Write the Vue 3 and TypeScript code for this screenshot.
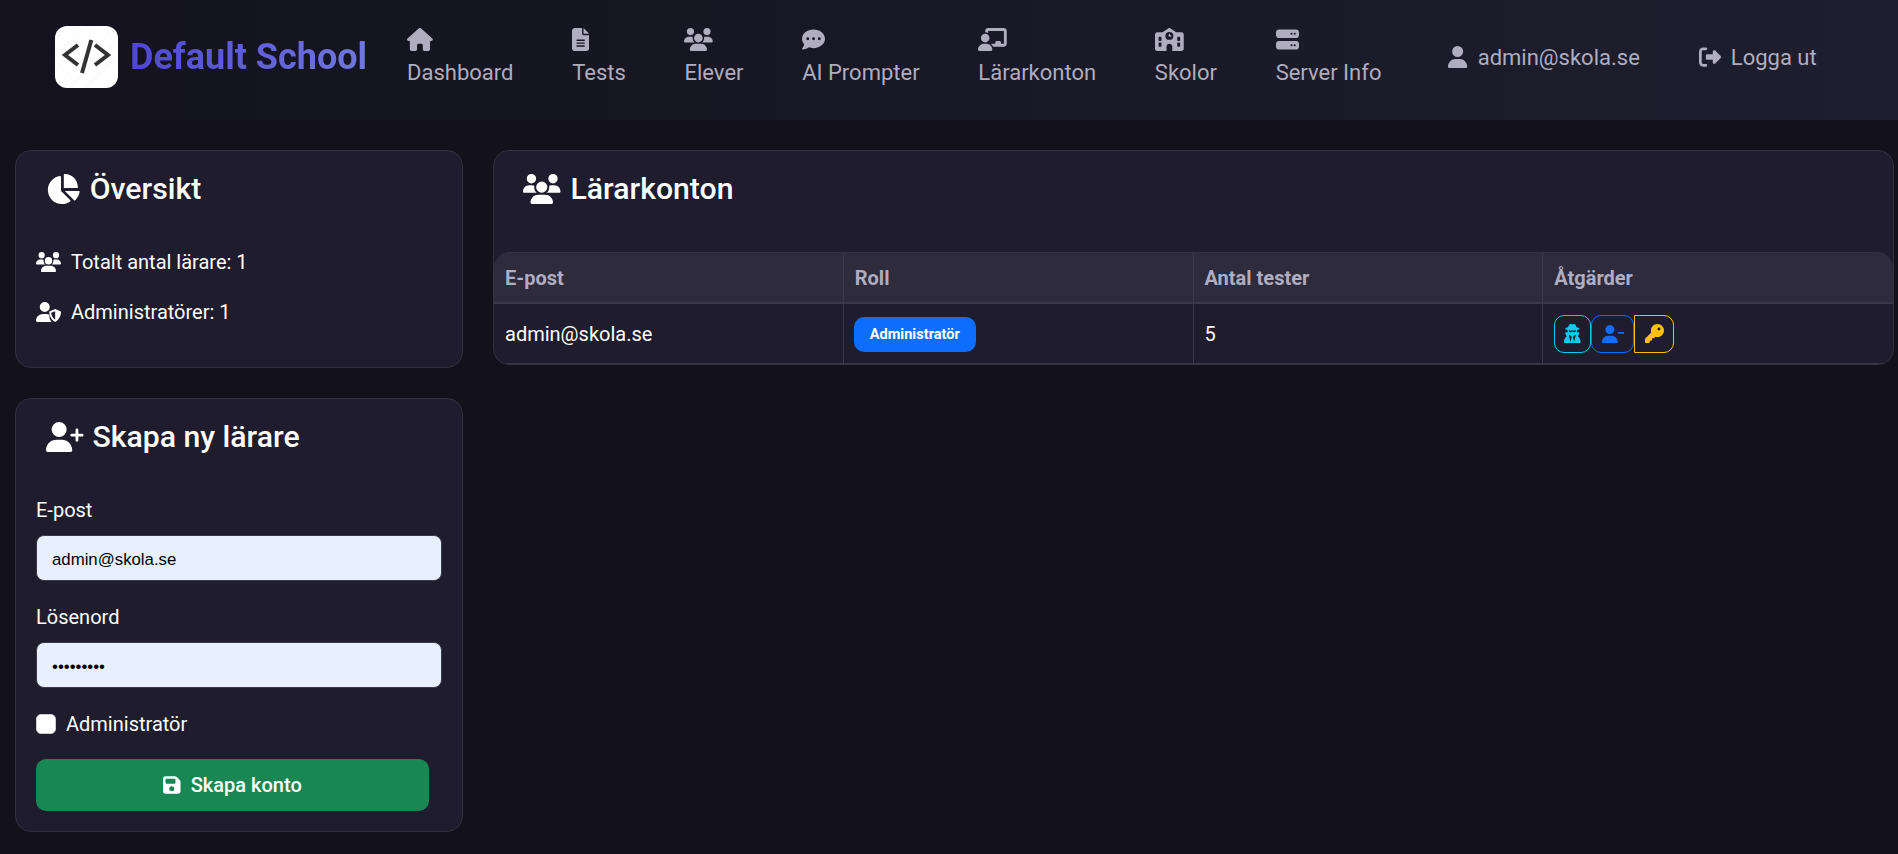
<script setup lang="ts">
const userBody = 'M96 128a128 128 0 1 1 256 0A128 128 0 1 1 96 128zM0 482.3C0 383.8 79.8 304 178.3 304h91.4C368.2 304 448 383.8 448 482.3c0 16.4-13.3 29.7-29.7 29.7H29.7C13.3 512 0 498.7 0 482.3z'
const users = 'M144 0a80 80 0 1 1 0 160A80 80 0 1 1 144 0zM512 0a80 80 0 1 1 0 160A80 80 0 1 1 512 0zM0 298.7C0 239.8 47.8 192 106.7 192h42.7c15.9 0 31 3.5 44.6 9.7c-1.3 7.2-1.9 14.7-1.9 22.3c0 38.2 16.8 72.5 43.3 96c-.2 0-.4 0-.7 0H21.3C9.6 320 0 310.4 0 298.7zM405.3 320c-.2 0-.4 0-.7 0c26.6-23.5 43.3-57.8 43.3-96c0-7.6-.7-15-1.9-22.3c13.6-6.3 28.7-9.7 44.6-9.7h42.7C592.2 192 640 239.8 640 298.7c0 11.8-9.6 21.3-21.3 21.3H405.3zM224 224a96 96 0 1 1 192 0 96 96 0 1 1 -192 0zM128 485.3C128 411.7 187.7 352 261.3 352H378.7C452.3 352 512 411.7 512 485.3c0 14.7-11.9 26.7-26.7 26.7H154.7c-14.7 0-26.7-11.9-26.7-26.7z'
const pie = 'M304 240V16.6c0-9 7-16.6 16-16.6C443.7 0 544 100.3 544 224c0 9-7.6 16-16.6 16H304zM32 272C32 150.7 122.1 50.3 239 34.3c9.2-1.3 17 6.1 17 15.4V288L412.5 444.5c6.7 6.7 6.2 17.7-1.5 23.1C371.8 495.6 323.8 512 272 512C139.5 512 32 404.6 32 272zm526.4 16c9.3 0 16.6 7.8 15.4 17c-7.7 55.9-34.6 105.6-73.9 142.3c-6 5.6-15.4 5.2-21.2-.7L320 288H558.4z'
const shield = 'M224 256A128 128 0 1 0 224 0a128 128 0 1 0 0 256zm-45.7 48C79.8 304 0 383.8 0 482.3C0 498.7 13.3 512 29.7 512H400c-35-40-60-95-60-165c0-8 1-15 3-22c-22-14-48-21-73-21H178.3zM490 180l135 56c9 4 15 13 15 22c0 60-26 180-140 250c-6 4-14 4-20 0C366 438 340 318 340 258c0-9 6-18 15-22l135-56zM490 235L390 277C392 327 415 407 490 452Z'
const plus = userBody + 'M504 312V248H440c-13.3 0-24-10.7-24-24s10.7-24 24-24h64V136c0-13.3 10.7-24 24-24s24 10.7 24 24v64h64c13.3 0 24 10.7 24 24s-10.7 24-24 24H552v64c0 13.3-10.7 24-24 24s-24-10.7-24-24z'
const minus = userBody + 'M472 200H616c13.3 0 24 10.7 24 24s-10.7 24-24 24H472c-13.3 0-24-10.7-24-24s10.7-24 24-24z'
const floppy = 'M64 32C28.7 32 0 60.7 0 96V416c0 35.3 28.7 64 64 64H384c35.3 0 64-28.7 64-64V173.3c0-17-6.7-33.3-18.7-45.3L352 50.7C340 38.7 323.7 32 306.7 32H64zm0 96c0-17.7 14.3-32 32-32H288c17.7 0 32 14.3 32 32v64c0 17.7-14.3 32-32 32H96c-17.7 0-32-14.3-32-32V128zM224 288a64 64 0 1 1 0 128 64 64 0 1 1 0-128z'
const key = 'M336 352c97.2 0 176-78.8 176-176S433.2 0 336 0S160 78.8 160 176c0 18.7 2.9 36.8 8.3 53.7L7 391c-4.5 4.5-7 10.6-7 17v80c0 13.3 10.7 24 24 24h80c13.3 0 24-10.7 24-24V448h40c13.3 0 24-10.7 24-24V384h40c6.4 0 12.5-2.5 17-7l33.3-33.3c16.9 5.4 35 8.3 53.7 8.3zM376 96a40 40 0 1 1 0 80 40 40 0 1 1 0-80z'
const secret = 'M224 16c-6.7 0-10.8-2.8-15.5-6.1C201.9 5.4 194 0 176 0c-30.5 0-52 43.7-66 89.4C62.7 98.1 32 112.2 32 128c0 14.3 25 27.1 64.6 35.9c-.4 4-.6 8-.6 12.1c0 17 3.3 33.2 9.3 48H45.4C38 224 32 230 32 237.4c0 1.7 .3 3.4 1 5l38.8 96.9C28.2 371.8 0 423.8 0 482.3C0 498.7 13.3 512 29.7 512H418.3c16.4 0 29.7-13.3 29.7-29.7c0-58.5-28.2-110.4-71.7-143L415 242.4c.6-1.6 1-3.3 1-5c0-7.4-6-13.4-13.4-13.4H342.7c6-14.8 9.3-31 9.3-48c0-4.1-.2-8.1-.6-12.1C391 155.1 416 142.3 416 128c0-15.8-30.7-29.9-78-38.6C324 43.7 302.5 0 272 0c-18 0-25.9 5.4-32.5 9.9c-4.8 3.3-8.8 6.1-15.5 6.1zm56 208H267.6c-16.5 0-31.1-10.6-36.3-26.2c-2.3-7-12.2-7-14.5 0c-5.2 15.6-19.9 26.2-36.3 26.2H168c-22.1 0-40-17.9-40-40V169.6c28.2 4.1 61 6.4 96 6.4s67.8-2.3 96-6.4V184c0 22.1-17.9 40-40 40zm-88 96l16 32L176 480 128 288l64 32zm128-32L272 480 240 352l16-32 64-32z'

const navItems = [
  { label: 'Dashboard', vb: '0 0 576 512', d: 'M575.8 255.5c0 18-15 32.1-32 32.1h-32l.7 160.2c0 2.7-.2 5.4-.5 8.1V472c0 22.1-17.9 40-40 40H456c-1.1 0-2.2 0-3.3-.1c-1.4 .1-2.8 .1-4.2 .1H416 392c-22.1 0-40-17.9-40-40V448 384c0-17.7-14.3-32-32-32H256c-17.7 0-32 14.3-32 32v64 24c0 22.1-17.9 40-40 40H160 128.1c-1.5 0-3-.1-4.5-.2c-1.2 .1-2.4 .2-3.6 .2H104c-22.1 0-40-17.9-40-40V360c0-.9 0-1.9 .1-2.8V287.6H32c-18 0-32-14-32-32.1c0-9 3-17 10-24L266.4 8c7-7 15-8 22-8s15 2 21 7L564.8 231.5c8 7 12 15 11 24z' },
  { label: 'Tests', vb: '0 0 384 512', d: 'M64 0C28.7 0 0 28.7 0 64V448c0 35.3 28.7 64 64 64H320c35.3 0 64-28.7 64-64V160H256c-17.7 0-32-14.3-32-32V0H64zM256 0V128H384L256 0zM112 256H272c8.8 0 16 7.2 16 16s-7.2 16-16 16H112c-8.8 0-16-7.2-16-16s7.2-16 16-16zm0 64H272c8.8 0 16 7.2 16 16s-7.2 16-16 16H112c-8.8 0-16-7.2-16-16s7.2-16 16-16zm0 64H272c8.8 0 16 7.2 16 16s-7.2 16-16 16H112c-8.8 0-16-7.2-16-16s7.2-16 16-16z' },
  { label: 'Elever', vb: '0 0 640 512', d: users },
  { label: 'AI Prompter', vb: '0 0 512 512', d: 'M256 448c141.4 0 256-93.1 256-208S397.4 32 256 32S0 125.1 0 240c0 45.1 17.7 86.8 47.7 120.9c-1.9 24.5-11.4 46.3-21.4 62.9c-5.5 9.2-11.1 16.6-15.2 21.6c-2.1 2.5-3.7 4.4-4.9 5.7c-.6 .6-1 1.1-1.3 1.4l-.3 .3c-4.6 4.6-5.9 11.4-3.4 17.4c2.5 6 8.3 9.9 14.8 9.9c28.7 0 57.6-8.9 81.6-19.3c22.9-10 42.4-21.9 54.3-30.6c31.8 11.5 67 17.9 104.1 17.9zM128 208a32 32 0 1 1 0 64 32 32 0 1 1 0-64zm128 0a32 32 0 1 1 0 64 32 32 0 1 1 0-64zm96 32a32 32 0 1 1 64 0 32 32 0 1 1 -64 0z' },
  { label: 'Lärarkonton', vb: '0 0 640 512', d: 'M160 64c0-35.3 28.7-64 64-64H576c35.3 0 64 28.7 64 64V352c0 35.3-28.7 64-64 64H336.8c-11.8-25.5-29.9-47.5-52.4-64H384V320c0-17.7 14.3-32 32-32h64c17.7 0 32 14.3 32 32v32h64V64L224 64v49.1C205.2 102.2 183.3 96 160 96V64zm0 64a96 96 0 1 1 0 192 96 96 0 1 1 0-192zM133.3 352h53.3C260.3 352 320 411.7 320 485.3c0 14.7-11.9 26.7-26.7 26.7H26.7C11.9 512 0 500.1 0 485.3C0 411.7 59.7 352 133.3 352z' },
  { label: 'Skolor', vb: '0 0 640 512', d: 'M337.8 5.4C327-1.8 313-1.8 302.2 5.4L166.3 96H48C21.5 96 0 117.5 0 144V464c0 26.5 21.5 48 48 48H592c26.5 0 48-21.5 48-48V144c0-26.5-21.5-48-48-48H473.7L337.8 5.4zM256 416c0-35.3 28.7-64 64-64s64 28.7 64 64v96H256V416zM96 192h32c8.8 0 16 7.2 16 16v64c0 8.8-7.2 16-16 16H96c-8.8 0-16-7.2-16-16V208c0-8.8 7.2-16 16-16zm400 16c0-8.8 7.2-16 16-16h32c8.8 0 16 7.2 16 16v64c0 8.8-7.2 16-16 16H512c-8.8 0-16-7.2-16-16V208zM96 320h32c8.8 0 16 7.2 16 16v64c0 8.8-7.2 16-16 16H96c-8.8 0-16-7.2-16-16V336c0-8.8 7.2-16 16-16zm400 16c0-8.8 7.2-16 16-16h32c8.8 0 16 7.2 16 16v64c0 8.8-7.2 16-16 16H512c-8.8 0-16-7.2-16-16V336zM232 176a88 88 0 1 1 176 0 88 88 0 1 1 -176 0zm88-48c-8.8 0-16 7.2-16 16v32c0 8.8 7.2 16 16 16h32c8.8 0 16-7.2 16-16s-7.2-16-16-16H336V144c0-8.8-7.2-16-16-16z' },
  { label: 'Server Info', vb: '0 0 512 512', d: 'M64 32C28.7 32 0 60.7 0 96v64c0 35.3 28.7 64 64 64H448c35.3 0 64-28.7 64-64V96c0-35.3-28.7-64-64-64H64zm280 72a24 24 0 1 1 0 48 24 24 0 1 1 0-48zm48 24a24 24 0 1 1 48 0 24 24 0 1 1 -48 0zM64 288c-35.3 0-64 28.7-64 64v64c0 35.3 28.7 64 64 64H448c35.3 0 64-28.7 64-64V352c0-35.3-28.7-64-64-64H64zm280 72a24 24 0 1 1 0 48 24 24 0 1 1 0-48zm48 24a24 24 0 1 1 48 0 24 24 0 1 1 -48 0z' },
]
const logout = 'M377.9 105.9L500.7 228.7c7.2 7.2 11.3 17.1 11.3 27.3s-4.1 20.1-11.3 27.3L377.9 406.1c-6.4 6.4-15 9.9-24 9.9c-18.7 0-33.9-15.2-33.9-33.9l0-62.1-128 0c-17.7 0-32-14.3-32-32l0-64c0-17.7 14.3-32 32-32l128 0 0-62.1c0-18.7 15.2-33.9 33.9-33.9c9 0 17.6 3.6 24 9.9zM160 96L96 96c-17.7 0-32 14.3-32 32l0 256c0 17.7 14.3 32 32 32l64 0c17.7 0 32 14.3 32 32s-14.3 32-32 32l-64 0c-53 0-96-43-96-96L0 128C0 75 43 32 96 32l64 0c17.7 0 32 14.3 32 32s-14.3 32-32 32z'
</script>

<template>
  <div class="page">
    <nav class="nav">
      <a class="brand">
        <span class="logo">
          <svg viewBox="0 0 63 62" width="63" height="62">
            <path d="M23 19 L10 29 L23 39 M40 19 L53 29 L40 39" fill="none" stroke="#333" stroke-width="4" />
            <path d="M36.300 14 L27 47" fill="none" stroke="#333" stroke-width="4" />
          </svg>
        </span>
        <span class="brand-text">Default School</span>
      </a>
      <div class="nav-links">
        <a v-for="item in navItems" :key="item.label" class="nav-link">
          <svg class="nav-icon" :viewBox="item.vb" fill="currentColor"><path :d="item.d" /></svg>
          <span>{{ item.label }}</span>
        </a>
      </div>
      <div class="nav-right">
        <a class="nav-side user">
          <svg class="side-icon" viewBox="0 0 448 512" fill="currentColor"><path :d="userBody" /></svg>
          <span>admin@skola.se</span>
        </a>
        <a class="nav-side">
          <svg class="side-icon" viewBox="0 0 512 512" fill="currentColor"><path :d="logout" /></svg>
          <span>Logga ut</span>
        </a>
      </div>
    </nav>

    <main class="main">
      <aside class="side">
        <section class="card overview">
          <h2 class="title overview-title">
            <svg class="title-icon" viewBox="0 0 576 512" fill="currentColor"><path :d="pie" /></svg>
            Översikt
          </h2>
          <p class="stat">
            <svg class="stat-icon" viewBox="0 0 640 512" fill="currentColor"><path :d="users" /></svg>
            Totalt antal lärare: 1
          </p>
          <p class="stat">
            <svg class="stat-icon" viewBox="0 0 640 512" fill="currentColor"><path :d="shield" fill-rule="evenodd" /></svg>
            Administratörer: 1
          </p>
        </section>

        <section class="card create">
          <h2 class="title create-title">
            <svg class="title-icon" viewBox="0 0 640 512" fill="currentColor"><path :d="plus" /></svg>
            Skapa ny lärare
          </h2>
          <form class="form" @submit.prevent>
            <label class="label" for="email">E-post</label>
            <input id="email" class="input" type="email" value="admin@skola.se" />
            <label class="label" for="pw">Lösenord</label>
            <input id="pw" class="input" type="password" value="password1" />
            <label class="check">
              <input class="checkbox" type="checkbox" />
              <span>Administratör</span>
            </label>
            <button class="submit" type="submit">
              <svg class="save-icon" viewBox="0 0 448 512" fill="currentColor"><path :d="floppy" /></svg>
              Skapa konto
            </button>
          </form>
        </section>
      </aside>

      <section class="card accounts">
        <h2 class="title accounts-title">
          <svg class="title-icon" viewBox="0 0 640 512" fill="currentColor"><path :d="users" /></svg>
          Lärarkonton
        </h2>
        <table class="table">
          <thead>
            <tr>
              <th>E-post</th>
              <th>Roll</th>
              <th>Antal tester</th>
              <th>Åtgärder</th>
            </tr>
          </thead>
          <tbody>
            <tr>
              <td>admin@skola.se</td>
              <td><span class="badge">Administratör</span></td>
              <td>5</td>
              <td>
                <div class="actions">
                  <button class="act cyan"><svg viewBox="0 0 448 512" fill="currentColor"><path :d="secret" /></svg></button>
                  <button class="act blue"><svg viewBox="0 0 640 512" fill="currentColor"><path :d="minus" /></svg></button>
                  <button class="act yellow"><svg viewBox="0 0 512 512" fill="currentColor"><path :d="key" /></svg></button>
                </div>
              </td>
            </tr>
          </tbody>
        </table>
      </section>
    </main>
  </div>
</template>

<style>
html, body { margin: 0; background: #12111c; }
</style>

<style scoped>
.page {
  min-height: 854px;
  font-family: Roboto, "Liberation Sans", sans-serif;
  background: #12111c;
  color: #fff;
  overflow: hidden;
}
.nav {
  height: 120px;
  box-sizing: border-box;
  display: flex;
  align-items: center;
  padding: 0 0 6px 55px;
  background: linear-gradient(90deg, #13121e 0%, #1e1e2e 100%);
  color: #b0adbf;
}
.brand { display: flex; align-items: center; gap: 12px; }
.logo {
  width: 63px;
  height: 62px;
  background: repeating-linear-gradient(135deg, #fff 0 9px, #fbfbfb 9px 11px);
  border-radius: 12px;
  display: block;
}
.logo svg { display: block; }
.brand-text {
  font-size: 36px;
  font-weight: 700;
  background: linear-gradient(90deg, #4f46d4, #7078de);
  -webkit-background-clip: text;
  background-clip: text;
  color: transparent;
}
.nav-links { display: flex; gap: 58.700px; margin-left: 40px; }
.nav-link { display: flex; flex-direction: column; align-items: flex-start; gap: 9px; font-size: 22px; line-height: 26px; }
.nav-icon { height: 23px; display: block; }
.nav-right { display: flex; gap: 59px; margin-left: 67px; }
.nav-side { display: flex; align-items: center; gap: 10px; font-size: 22px; }
.side-icon { height: 22px; display: block; }

.main {
  display: grid;
  grid-template-columns: 448px 1401px;
  gap: 30px;
  padding: 30px 0 0 15px;
  align-items: start;
}
.side { display: flex; flex-direction: column; gap: 30px; }
.card {
  background: #1e1c2d;
  border: 1px solid #33313f;
  border-radius: 16px;
  box-sizing: border-box;
}
.title {
  margin: 0;
  display: flex;
  align-items: center;
  font-size: 30.200px;
  font-weight: 500;
  line-height: 36px;
}
.title-icon { height: 30px; display: block; }
.overview { height: 218px; padding: 20px 20px 0; }
.overview-title { padding-left: 10px; gap: 10px; margin-bottom: 43px; }
.stat {
  margin: 0 0 26px;
  display: flex;
  align-items: center;
  gap: 10px;
  font-size: 20px;
  line-height: 24px;
}
.stat-icon { width: 25px; height: 20px; display: block; }

.create { height: 434px; padding: 20px 20px 0; }
.create-title { padding-left: 10px; gap: 9px; margin-bottom: 43px; }
.form { display: flex; flex-direction: column; }
.label { font-size: 20px; line-height: 24px; margin-bottom: 13px; }
.input {
  width: 406px;
  height: 46px;
  box-sizing: border-box;
  background: #e8f0fe;
  border: 1px solid #3a3849;
  border-radius: 8px;
  padding: 3px 15px 0;
  font-family: "Liberation Sans", Arial, sans-serif;
  font-size: 16.800px;
  color: #000;
  margin-bottom: 24px;
  outline: none;
}
.check { display: flex; align-items: center; gap: 10px; font-size: 20px; height: 24px; margin-bottom: 23px; }
.checkbox {
  appearance: none;
  width: 20px;
  height: 20px;
  margin: 0;
  background: #fff;
  border: 1px solid #ccc;
  border-radius: 5px;
}
.submit {
  width: 393px;
  height: 52px;
  display: flex;
  align-items: center;
  justify-content: center;
  gap: 10px;
  background: #198754;
  border: none;
  border-radius: 10px;
  color: #fff;
  font-family: inherit;
  font-size: 20px;
  font-weight: 500;
}
.save-icon { height: 20px; display: block; }

.accounts { height: 215px; padding-top: 20px; overflow: hidden; }
.accounts-title { padding-left: 29px; gap: 10px; margin-bottom: 45px; }
.table { width: 100%; table-layout: fixed; border-collapse: separate; border-spacing: 0; font-size: 20px; }
.table th {
  height: 52px;
  box-sizing: border-box;
  background: #2d2b3c;
  color: #b0adc0;
  font-weight: 700;
  text-align: left;
  padding: 1px 11px 0;
  border-bottom: 2px solid #3a3849;
  border-right: 1px solid #3a3849;
  border-top: 1px solid #33313f;
}
.table th:first-child { border-top-left-radius: 16px; }
.table th:last-child { border-top-right-radius: 16px; border-right: none; }
.table td {
  height: 60px;
  box-sizing: border-box;
  padding: 0 11px;
  border-right: 1px solid #3a3849;
  border-bottom: 1px solid #3a3849;
}
.table td:last-child { border-right: none; }
.badge {
  display: inline-block;
  width: 122px;
  height: 35px;
  line-height: 35px;
  text-align: center;
  background: #0d6efd;
  border-radius: 10px;
  font-size: 14.600px;
  font-weight: 700;
  margin: 2px 0 0 -1px;
}
.actions { display: flex; align-items: center; }
.act {
  height: 38px;
  padding: 0;
  background: transparent;
  display: flex;
  align-items: center;
  justify-content: center;
  border-radius: 10px;
  border: 1px solid;
}
.act svg { height: 18px; display: block; }
.cyan svg, .yellow svg { height: 19px; }
.cyan { width: 37px; color: #0dcaf0; border-color: #0dcaf0; }
.blue { width: 43px; color: #0d6efd; border-color: #0d6efd; }
.yellow { width: 40px; color: #ffc107; border-color: #ffc107; border-radius: 0 10px 10px 0; }
</style>
